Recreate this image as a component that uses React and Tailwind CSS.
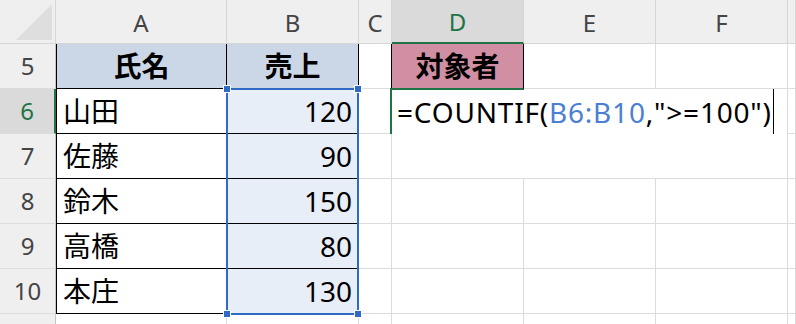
import React from 'react';
import { twMerge } from 'tailwind-merge';

const cn = (...c) => twMerge(c.filter(Boolean).join(' '));

const people = [
  ['山田', 120],
  ['佐藤', 90],
  ['鈴木', 150],
  ['高橋', 80],
  ['本庄', 130],
];

const GREEN = 'bg-[#217346]';

function ColHead({ label, active }) {
  return (
    <div
      className={cn(
        'flex items-center justify-center border-r border-b border-[#d6d6d6] bg-[#efefef] text-[24px] leading-none text-[#444] pt-[2px]',
        active && 'bg-[#dadada] text-[#217346] border-b-2 border-b-[#217346]'
      )}
    >
      {label}
    </div>
  );
}

function RowHead({ n, active }) {
  return (
    <div
      className={cn(
        'flex items-center justify-center border-r border-b border-r-[#c4c4c4] border-b-[#dcdcdc] bg-[#efefef] text-[24px] leading-none text-[#444]',
        active && 'bg-[#dadada] text-[#217346] border-r-2 border-r-[#217346]'
      )}
    >
      {n}
    </div>
  );
}

function Cell({ className, children }) {
  return (
    <div className={cn('relative flex items-center border-r border-b border-[#dcdcdc] bg-white text-[28px] leading-none text-black', className)}>
      {children}
    </div>
  );
}

// blue range outline with the four corner handles
function RangeBox() {
  const handle = 'absolute w-[8px] h-[8px] bg-[#2f6bc6] border border-white';
  return (
    <div className="pointer-events-none absolute left-[-1px] top-[-1px] z-20 w-[133px] h-[227px] border-2 border-[#2f6bc6]">
      <div className={cn(handle, 'left-[-5px] top-[-5px]')} />
      <div className={cn(handle, 'right-[-5px] top-[-5px]')} />
      <div className={cn(handle, 'left-[-5px] bottom-[-5px]')} />
      <div className={cn(handle, 'right-[-5px] bottom-[-5px]')} />
    </div>
  );
}

// in-cell editor spilling over E6:F7
function Editor() {
  return (
    <>
      <div className="absolute left-0 top-0 z-10 w-[395px] h-[89px] bg-white">
        <div className="flex h-[45px] items-center pl-[5px] text-[28px] leading-none tracking-[0.8px] text-black">
          <span>=COUNTIF(</span>
          <span className="text-[#4a7fd3]">B6:B10</span>
          <span>,"&gt;=100")</span>
          <span className="ml-[1px] inline-block h-[45px] w-px bg-black" />
        </div>
      </div>
      <div className={cn('absolute left-[-2px] top-[-1px] z-20 w-[2px] h-[46px]', GREEN)} />
      <div className={cn('absolute left-0 top-0 z-20 w-[132px] h-px', GREEN)} />
    </>
  );
}

export default function App() {
  return (
    <div className="h-[324px] w-[796px] overflow-hidden bg-white font-['Noto_Sans','Noto_Sans_CJK_JP',sans-serif]">
      <div className="grid grid-cols-[56px_171px_132px_33px_132px_132px_132px_8px] grid-rows-[44px_repeat(7,45px)]">
        {/* column headers */}
        <div className="flex items-end justify-end border-r border-b border-[#d6d6d6] bg-[#efefef] pr-[3px] pb-[3px]">
          <svg width="36" height="36" viewBox="0 0 36 36">
            <polygon points="0,36 36,36 36,0" fill="#dedede" />
          </svg>
        </div>
        <ColHead label="A" />
        <ColHead label="B" />
        <ColHead label="C" />
        <ColHead label="D" active />
        <ColHead label="E" />
        <ColHead label="F" />
        <ColHead label="" />

        {/* row 5: table headings */}
        <RowHead n={5} />
        <Cell className="justify-center bg-[#cbd7e6] border-l border-black font-bold">氏名</Cell>
        <Cell className="justify-center bg-[#cbd7e6] border-black font-bold">売上</Cell>
        <Cell className="border-r-black" />
        <Cell className="justify-center bg-[#d08fa2] border-r-black border-b-[#217346] font-bold">対象者</Cell>
        <Cell />
        <Cell />
        <Cell />

        {people.map(([name, sales], i) => (
          <React.Fragment key={name}>
            <RowHead n={6 + i} active={i === 0} />
            <Cell className="border-l border-black pl-[6px]">{name}</Cell>
            <Cell className="justify-end bg-[#e8eef8] border-black pr-[6px]">
              {i === 0 && <RangeBox />}
              {sales}
            </Cell>
            <Cell />
            <Cell>{i === 0 && <Editor />}</Cell>
            <Cell />
            <Cell />
            <Cell />
          </React.Fragment>
        ))}

        {/* next row, only its top edge shows */}
        <RowHead />
        <Cell />
        <Cell />
        <Cell />
        <Cell />
        <Cell />
        <Cell />
        <Cell />
      </div>
    </div>
  );
}
